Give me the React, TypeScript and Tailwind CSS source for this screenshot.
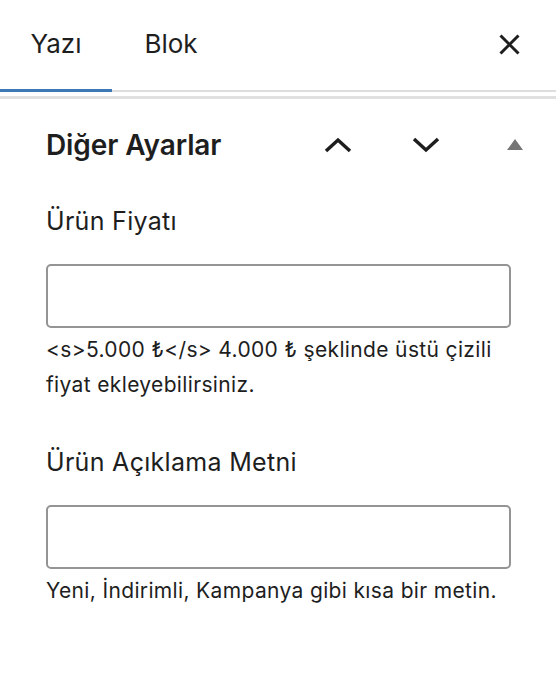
import { useState } from "react";

const font = { fontFamily: "Inter, 'Noto Sans', sans-serif" };

function Field({ label, help }: { label: string; help: string }) {
    const [value, setValue] = useState("");
    return (
        <div className="flex flex-col">
            <label className="text-[25px] leading-[32px] tracking-[0.3px] text-[#1e1e1e]">{label}</label>
            <input
                value={value}
                onChange={(e) => setValue(e.target.value)}
                className="mt-[27px] h-[64px] w-[465px] rounded-[5px] border-2 border-[#949494] bg-white px-4 text-[24px] outline-none"
            />
            <p className="mt-[4px] text-[21px] leading-[35px] tracking-[0.35px] text-[#1e1e1e]">{help}</p>
        </div>
    );
}

export default function App() {
    return (
        <div className="h-[690px] w-[556px] bg-white text-[#1e1e1e]" style={font}>
            {/* Tabs */}
            <div className="relative flex h-[92px] items-start border-b-2 border-[#dddddd]">
                <button className="relative h-[90px] w-[112px] pb-1 text-[26px] text-[#1e1e1e]">
                    Yazı
                    <span className="absolute -bottom-[2px] left-0 h-[3px] w-[112px] bg-[#3a78b6]" />
                </button>
                <button className="h-[90px] w-[118px] pb-1 text-[26px] text-[#1e1e1e]">Blok</button>
                <button className="ml-auto mr-[36px] mt-[34px] flex h-[21px] w-[21px] items-center justify-center">
                    <svg width="21" height="21" viewBox="0 0 21 21" fill="none" stroke="#1e1e1e" strokeWidth="3">
                        <path d="M1.5 1.5 L19.5 19.5 M19.5 1.5 L1.5 19.5" />
                    </svg>
                </button>
            </div>

            {/* Panel */}
            <div className="mt-[4px] border-t-[3px] border-[#e0e0e0] px-[46px]">
                <div className="-mr-[13px] flex h-[90px] items-center pt-[1px]">
                    <h2 className="flex-1 text-[28px] font-semibold tracking-[-0.1px]">Diğer Ayarlar</h2>
                    <button className="flex h-[40px] w-[40px] items-center justify-center">
                        <svg width="28" height="16" viewBox="0 0 28 16" fill="none" stroke="#1e1e1e" strokeWidth="3.5">
                            <path d="M2 14 L14 3 L26 14" />
                        </svg>
                    </button>
                    <button className="ml-[48px] flex h-[40px] w-[40px] items-center justify-center">
                        <svg width="28" height="16" viewBox="0 0 28 16" fill="none" stroke="#1e1e1e" strokeWidth="3.5">
                            <path d="M2 2 L14 13 L26 2" />
                        </svg>
                    </button>
                    <button className="ml-[47px] flex h-[40px] w-[30px] items-center justify-end">
                        <svg width="16" height="11" viewBox="0 0 16 11">
                            <path d="M8 0 L16 11 L0 11 Z" fill="#757575" />
                        </svg>
                    </button>
                </div>

                <div className="flex flex-col gap-[44px] pt-[16px]">
                    <Field label="Ürün Fiyatı" help="<s>5.000 ₺</s> 4.000 ₺ şeklinde üstü çizili fiyat ekleyebilirsiniz." />
                    <Field label="Ürün Açıklama Metni" help="Yeni, İndirimli, Kampanya gibi kısa bir metin." />
                </div>
            </div>
        </div>
    );
}
